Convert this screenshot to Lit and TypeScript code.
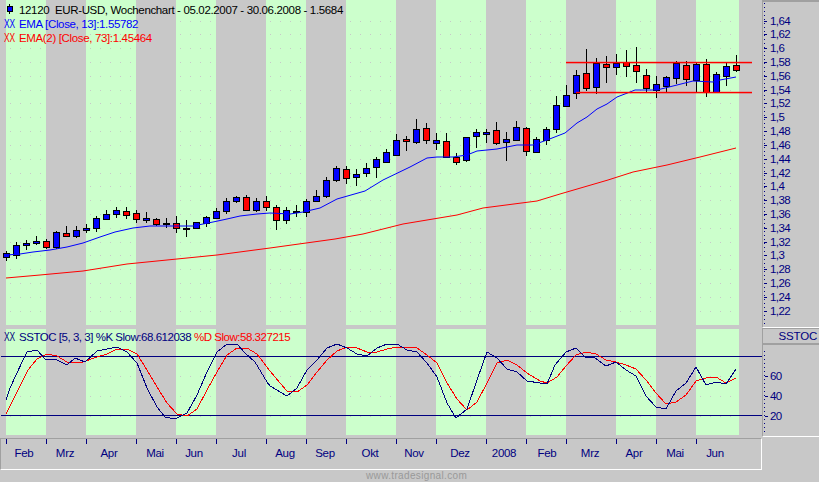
import { LitElement, html, svg, css } from "lit";
import { customElement } from "lit/decorators.js";

// all chart data is in page pixels, each svg uses a viewBox so the numbers stay absolute
const BANDS = [
  [6, 46], [86, 136], [176, 216], [266, 306], [346, 396],
  [436, 486], [526, 566], [616, 656], [696, 739],
];

// high, body top, body bottom, low, 1 = falling week
const CANDLES: [number, number, number, number, number][] = [
  [251, 253, 257, 261, 0], [242, 245, 255, 259, 0], [240, 243, 245, 250, 0], [236, 241, 243, 245, 0],
  [239, 241, 247, 249, 1], [231, 232, 247, 249, 0], [226, 233, 236, 237, 1], [226, 230, 236, 238, 0],
  [224, 228, 230, 233, 0], [216, 218, 228, 232, 0], [210, 214, 219, 219, 0], [207, 210, 214, 218, 0],
  [207, 211, 215, 219, 1], [210, 213, 219, 223, 1], [212, 218, 220, 223, 0], [218, 219, 224, 226, 1],
  [218, 223, 224, 228, 0], [216, 223, 228, 233, 1], [220, 228, 229, 237, 0], [222, 222, 228, 229, 0],
  [216, 217, 223, 227, 0], [208, 211, 218, 219, 0], [198, 201, 211, 214, 0], [196, 197, 201, 203, 0],
  [195, 197, 210, 211, 1], [198, 201, 210, 212, 0], [196, 201, 207, 211, 1], [205, 207, 220, 230, 1],
  [207, 210, 220, 224, 0], [205, 211, 212, 217, 0], [199, 201, 212, 217, 0], [190, 196, 201, 202, 0],
  [177, 180, 196, 198, 0], [166, 168, 180, 182, 0], [166, 169, 178, 184, 1], [169, 174, 177, 186, 0],
  [163, 168, 173, 177, 0], [157, 159, 167, 178, 0], [149, 152, 162, 162, 0], [134, 140, 155, 156, 0],
  [136, 139, 141, 151, 1], [119, 129, 142, 144, 0], [123, 128, 140, 144, 1], [133, 140, 143, 150, 0],
  [133, 141, 157, 157, 1], [153, 157, 162, 165, 1], [137, 137, 160, 162, 0], [129, 132, 136, 148, 0],
  [129, 132, 134, 143, 0], [122, 130, 143, 145, 1], [132, 139, 142, 161, 0], [121, 127, 140, 141, 0],
  [127, 128, 151, 156, 1], [137, 139, 152, 153, 0], [127, 129, 140, 145, 0], [96, 105, 129, 133, 0],
  [85, 95, 106, 107, 0], [70, 75, 93, 99, 0], [49, 73, 88, 91, 1], [58, 63, 87, 94, 0],
  [56, 64, 67, 83, 1], [54, 63, 67, 75, 0], [50, 62, 66, 77, 1], [47, 65, 71, 83, 1],
  [69, 75, 88, 92, 1], [76, 84, 90, 98, 0], [76, 77, 86, 92, 0], [61, 63, 78, 84, 0],
  [61, 65, 79, 86, 1], [63, 64, 80, 92, 0], [59, 64, 92, 97, 1], [72, 74, 92, 93, 0],
  [62, 66, 76, 86, 0], [55, 65, 70, 72, 1],
];

const EMA13 = "6,255 20,254 33,252 50,250 67,247 83,243 100,237 115,232 133,228 150,226 173,226 193,226 213,222 227,219 240,216 257,214 270,213 290,214 303,212 320,208 337,199 365,191 383,180 410,167 427,158 437,157 453,157 467,155 477,151 497,149 517,145 533,145 547,140 565,133 577,123 587,117 597,109 607,104 617,97 630,92 635,90 657,90 677,85 693,81 713,82 720,80 736,77";
const EMA73 = "6,278 40,275 83,271 127,264 177,259 217,255 270,248 335,239 363,234 403,224 457,215 483,208 537,201 560,194 608,180 633,172 667,165 700,157 736,148";

const SLOW_K = "6,400 10,388 23,360 27,352 37,350 46,360 55,359 67,365 75,358 85,362 97,351 107,349 117,347 127,352 137,363 147,388 157,407 165,417 175,419 187,413 197,395 207,372 217,352 227,344 237,344 245,353 255,362 267,382 270,386 287,396 297,388 307,370 317,360 327,348 337,344 347,348 357,354 367,356 377,348 387,344 397,344 407,350 417,352 427,363 437,377 447,403 456,418 467,409 477,380 487,352 497,358 507,369 517,372 527,381 540,383 547,384 555,365 566,352 576,348 585,357 595,358 606,366 616,362 626,370 636,376 646,396 656,407 666,409 676,391 686,383 696,367 706,385 716,382 726,384 736,369";
const SLOW_D = "6,414 17,392 28,370 37,359 47,354 57,356 67,362 83,362 97,357 107,354 117,349 127,349 137,354 147,370 157,387 167,403 177,414 187,416 197,409 207,390 217,372 227,355 237,348 247,348 257,354 270,371 280,383 287,391 297,392 307,385 317,372 327,360 337,351 347,347 357,348 367,352 377,352 387,349 397,347 407,347 417,348 427,355 437,363 447,383 457,399 467,410 477,402 487,383 497,363 507,360 517,365 527,373 540,381 547,383 557,377 566,366 576,355 586,352 596,354 606,360 616,362 626,365 636,369 646,380 656,393 666,404 676,402 686,395 696,381 706,378 716,377 726,383 736,378";

const MONTHS: [string, number][] = [
  ["Feb", 24], ["Mrz", 65], ["Apr", 109], ["Mai", 155], ["Jun", 194], ["Jul", 239],
  ["Aug", 285], ["Sep", 325], ["Okt", 370], ["Nov", 414], ["Dez", 460], ["2008", 504],
  ["Feb", 547], ["Mrz", 590], ["Apr", 634], ["Mai", 675], ["Jun", 715],
];
const TICKS = [6, 46, 86, 136, 176, 216, 266, 306, 346, 396, 436, 486, 526, 566, 616, 656, 696];

const PRICE_ROWS = Array.from({ length: 22 }, (_, i) => {
  const text = (1.64 - i * 0.02).toFixed(2).replace(/0$/, "").replace(".", ",");
  return { y: Math.round(20.5 + i * 13.82), text };
});

@customElement("app-root")
class AppRoot extends LitElement {
  static styles = css`
    :host {
      display: block;
      width: 819px;
      height: 482px;
      background: #c8c8c8;
      font-family: "Liberation Sans", Arial, sans-serif;
      font-size: 11.5px;
      color: #000;
      overflow: hidden;
    }
    svg {
      display: block;
    }
    .grid {
      display: grid;
      grid-template-columns: 762px 57px;
      grid-template-rows: 328px 109px 33px 12px;
    }
    .panel {
      position: relative;
    }
    .legend {
      position: absolute;
      left: 4px;
      top: 3px;
      line-height: 14px;
      white-space: nowrap;
      letter-spacing: -0.35px;
    }
    .stoch-legend {
      top: 2px;
      letter-spacing: -0.47px;
    }
    .legend-row {
      display: flex;
      align-items: center;
      gap: 4px;
    }
    .mark {
      display: inline-block;
      width: 11px;
      font-size: 12px;
      transform: scaleX(0.7);
      transform-origin: left;
      letter-spacing: 0;
    }
    .blue {
      color: #0000ff;
    }
    .red {
      color: #ff0000;
    }
    .navy {
      color: #000080;
    }
    .axis {
      border-left: 1px solid #a0a0a0;
      box-sizing: border-box;
    }
    .price-axis {
      border-top: 2px solid #a0a0a0;
      border-bottom: 1px solid #fff;
    }
    .stoch-axis {
      border-bottom: 1px solid #fff;
      display: flex;
      flex-direction: column;
    }
    .axis-title {
      height: 17px;
      box-sizing: border-box;
      border-top: 1px solid #a0a0a0;
      border-bottom: 2px solid #a0a0a0;
      padding-right: 2px;
      text-align: right;
      color: #000080;
      line-height: 15px;
      letter-spacing: -0.2px;
    }
    .time {
      margin-top: 1px;
      box-sizing: border-box;
      border-top: 1px solid #a0a0a0;
      border-left: 1px solid #a0a0a0;
      border-right: 1px solid #fff;
      border-bottom: 1px solid #fff;
    }
    .footer {
      grid-column: 1 / 3;
      padding-left: 366px;
      color: #999;
      font-size: 10px;
      line-height: 12px;
      letter-spacing: 0.35px;
    }
    .tick-text {
      fill: #000080;
      font-size: 11.5px;
      letter-spacing: -0.55px;
    }
    .month-text {
      fill: #000080;
      font-size: 11.5px;
      letter-spacing: -0.3px;
      text-anchor: middle;
    }
    .trend {
      fill: none;
      stroke-width: 1;
      shape-rendering: geometricPrecision;
    }
    .band-line {
      fill: #ff0000;
      shape-rendering: geometricPrecision;
    }
  `;

  private bands(y: number, h: number) {
    return BANDS.map(
      ([a, b]) => svg`<rect x=${a} y=${y} width=${b - a} height=${h} fill="#ccffcc" />`
    );
  }

  private dots(y: number) {
    return svg`<line x1="0" x2="762" y1=${y + 0.5} y2=${y + 0.5} stroke="#c8c8c8" stroke-dasharray="1 9" />`;
  }

  private candle(c: number[], i: number) {
    const x = 6 + i * 10;
    const [high, top, bottom, low, falling] = c;
    return svg`
      <rect x=${x} y=${high} width="1" height=${low - high} fill="#000" />
      <rect x=${x - 2.5} y=${top + 0.5} width="6" height=${bottom - top}
        fill=${falling ? "#ff0000" : "#0000ff"} stroke="#000" />
    `;
  }

  private priceChart() {
    return html`<svg width="762" height="328" viewBox="0 0 762 328" shape-rendering="crispEdges">
      ${this.bands(0, 325)}
      ${PRICE_ROWS.map((r) => this.dots(r.y))}
      ${CANDLES.map((c, i) => this.candle(c, i))}
      <polyline class="trend" points=${EMA73} stroke="#ff0000" />
      <polyline class="trend" points=${EMA13} stroke="#0000ff" />
      <rect class="band-line" x="566" y="61.8" width="186" height="1.5" />
      <rect class="band-line" x="576" y="91.8" width="176" height="1.5" />
    </svg>`;
  }

  private stochChart() {
    return html`<svg width="762" height="109" viewBox="0 328 762 109" shape-rendering="crispEdges">
      ${this.bands(329, 106)}
      ${[356, 376, 396, 416].map((y) => this.dots(y))}
      <rect x="1" y="356" width="761" height="1" fill="#000080" />
      <rect x="1" y="415" width="761" height="1" fill="#000080" />
      <polyline points=${SLOW_D} fill="none" stroke="#ff0000" />
      <polyline points=${SLOW_K} fill="none" stroke="#000080" />
    </svg>`;
  }

  render() {
    return html`
      <div class="grid">
        <div class="panel">
          ${this.priceChart()}
          <div class="legend">
            <div class="legend-row">
              <svg width="11" height="14" viewBox="0 0 11 14" shape-rendering="crispEdges">
                <rect x="5" y="1" width="1" height="10" fill="#000" />
                <rect x="3.5" y="3.5" width="5" height="5" fill="#0000ff" stroke="#000" />
              </svg>
              <span>12120&nbsp; EUR-USD, Wochenchart - 05.02.2007 - 30.06.2008 - 1.5684</span>
            </div>
            <div class="legend-row blue"><span class="mark">XX</span><span>EMA [Close, 13]:1.55782</span></div>
            <div class="legend-row red"><span class="mark">XX</span><span>EMA(2) [Close, 73]:1.45464</span></div>
          </div>
        </div>
        <div class="axis price-axis">
          <svg width="56" height="325" viewBox="763 2 56 325" shape-rendering="crispEdges">
            <line x1="764.5" x2="764.5" y1="3" y2="325" stroke="#000080" stroke-dasharray="1 3" />
            ${PRICE_ROWS.map(
              (r) => svg`
                <rect x="764" y=${r.y} width="3" height="1" fill="#000080" />
                <text class="tick-text" x="770" y=${r.y + 4}>${r.text}</text>
              `
            )}
          </svg>
        </div>

        <div class="panel">
          ${this.stochChart()}
          <div class="legend stoch-legend navy">
            <div class="legend-row">
              <span class="mark">XX</span>
              <span>SSTOC [5, 3, 3] %K Slow:68.612038 <span class="red">%D Slow:58.327215</span></span>
            </div>
          </div>
        </div>
        <div class="axis stoch-axis">
          <div class="axis-title">SSTOC</div>
          <svg width="56" height="91" viewBox="763 345 56 91" shape-rendering="crispEdges">
            <line x1="764.5" x2="764.5" y1="351" y2="435" stroke="#000080" stroke-dasharray="1 3" />
            ${[[376, "60"], [396, "40"], [416, "20"]].map(
              ([y, t]) => svg`
                <rect x="765" y=${y} width="3" height="1" fill="#000080" />
                <text class="tick-text" x="770" y=${(y as number) + 4}>${t}</text>
              `
            )}
          </svg>
        </div>

        <div class="time">
          <svg width="760" height="30" viewBox="1 439 760 30" shape-rendering="crispEdges">
            ${TICKS.map((x) => svg`<rect x=${x} y="439" width="1" height="5" fill="#000080" />`)}
            ${MONTHS.map(([t, x]) => svg`<text class="month-text" x=${x} y="457">${t}</text>`)}
          </svg>
        </div>
        <div></div>
        <div class="footer">www.tradesignal.com</div>
      </div>
    `;
  }
}

export { AppRoot };
